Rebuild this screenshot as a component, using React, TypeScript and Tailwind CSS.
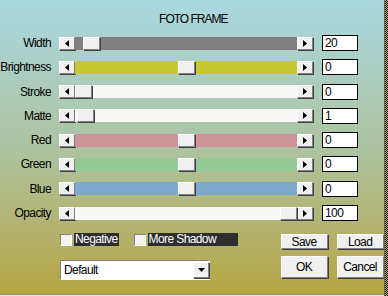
import React from "react";

type Row = { label: string; value: string; track: string; thumb: number };

const rows: Row[] = [
  { label: "Width", value: "20", track: "bg-[#808080]", thumb: 8 },
  { label: "Brightness", value: "0", track: "bg-[#c8c832]", thumb: 103 },
  { label: "Stroke", value: "0", track: "bg-[#f8f8f6]", thumb: 0 },
  { label: "Matte", value: "1", track: "bg-[#f8f8f6]", thumb: 2 },
  { label: "Red", value: "0", track: "bg-[#cc9498]", thumb: 103 },
  { label: "Green", value: "0", track: "bg-[#94c894]", thumb: 103 },
  { label: "Blue", value: "0", track: "bg-[#80a8cc]", thumb: 103 },
  { label: "Opacity", value: "100", track: "bg-[#f8f8f6]", thumb: 205 },
];

const bevel =
  "bg-[#f0f0f0] border border-t-white border-l-white border-r-[#808080] border-b-[#808080] shadow-[1px_1px_0_#404040]";

function Arrow({ dir }: { dir: "left" | "right" }) {
  return (
    <div className={`w-[16px] h-[13px] flex items-center justify-center ${bevel}`}>
      <svg width="4" height="7" viewBox="0 0 4 7">
        {dir === "left" ? <path d="M4 0 L0 3.5 L4 7 Z" fill="#000" /> : <path d="M0 0 L4 3.5 L0 7 Z" fill="#000" />}
      </svg>
    </div>
  );
}

function Slider({ row }: { row: Row }) {
  return (
    <div className="flex items-center h-[16px]">
      <div className="w-[52px] text-right pr-[1px]">{row.label}</div>
      <div className="ml-[7px] flex">
        <Arrow dir="left" />
        <div className={`relative w-[222px] h-[13px] ${row.track}`}>
          <div className={`absolute top-0 w-[17px] h-[13px] ${bevel}`} style={{ left: row.thumb }} />
        </div>
        <Arrow dir="right" />
      </div>
      <div className="ml-[9px] w-[36px] h-[16px] bg-white border border-black leading-[14px] pl-[2px]">{row.value}</div>
    </div>
  );
}

function Button({ label }: { label: string }) {
  return (
    <div className={`w-[47px] flex items-center justify-center ${bevel}`}>{label}</div>
  );
}

export default function App() {
  return (
    <div className="w-[388px] h-[296px] flex text-[12px] tracking-[-0.6px] text-black font-['Liberation_Sans',Arial,sans-serif]">
      <div className="flex-1 flex flex-col bg-gradient-to-b from-[#a9d8e1] via-[#adc3a0] to-[#b6a53e] border-b border-b-[#e8e8e8]">
        <div className="mt-[10px] h-[14px] text-center pl-[3px] tracking-[-1px]">FOTO FRAME</div>
        <div className="mt-[11px] flex flex-col gap-[8.3px]">
          {rows.map((r) => (
            <Slider key={r.label} row={r} />
          ))}
        </div>
        <div className="mt-[8px] flex">
          <div className="ml-[60px] flex flex-col">
            <div className="mt-[4px] flex items-center h-[13px]">
              <div className="w-[12px] h-[12px] border border-t-[#808080] border-l-[#808080] border-r-white border-b-white bg-[#f4f4f0]" />
              <div className="ml-[2px] h-[13px] px-[1px] bg-[#2e2e2e] text-white leading-[13px]">Negative</div>
              <div className="ml-[15px] w-[12px] h-[12px] border border-t-[#808080] border-l-[#808080] border-r-white border-b-white bg-[#f4f4f0]" />
              <div className="ml-[2px] w-[90px] h-[13px] px-[1px] bg-[#2e2e2e] text-white leading-[13px]">More Shadow</div>
            </div>
            <div className="mt-[14px] w-[150px] h-[20px] bg-white border border-t-[#808080] border-l-[#808080] border-r-white border-b-white flex items-center">
              <div className="flex-1 pl-[3px]">Default</div>
              <div className={`w-[16px] h-[16px] flex items-center justify-center ${bevel}`}>
                <svg width="7" height="4" viewBox="0 0 7 4">
                  <path d="M0 0 L7 0 L3.5 4 Z" fill="#000" />
                </svg>
              </div>
            </div>
          </div>
          <div className="ml-[43px] mt-[5px] grid grid-cols-[47px_47px] gap-x-[9px] gap-y-[7px] grid-rows-[15px_22px]">
            <Button label="Save" />
            <Button label="Load" />
            <Button label="OK" />
            <Button label="Cancel" />
          </div>
        </div>
        <div className="flex-1" />
        <div className="h-[1px] bg-[#909090]" />
      </div>
      <div className="w-[1px] bg-[#d8d8d0]" />
      <div className="w-[2px] bg-[#606060]" />
      <div className="w-[7px] bg-[repeating-conic-gradient(#1a1a10_0_25%,#b4ac3c_0_50%)] bg-[length:2px_2px]" />
    </div>
  );
}
